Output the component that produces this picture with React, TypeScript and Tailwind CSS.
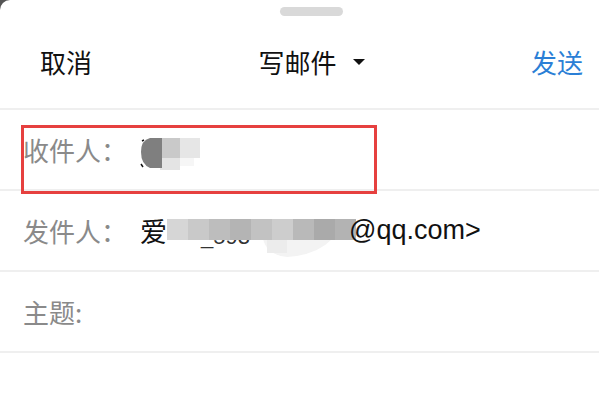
import React from "react";

const CJK = "font-['Noto_Sans_CJK_SC','Noto_Sans',sans-serif]";

function RecipientBlur() {
  return (
    <svg width="62" height="32" viewBox="0 0 62 32" aria-hidden="true" className="block">
      <rect x="20" y="0" width="20" height="20" fill="#c9c9c9" />
      <rect x="20" y="20" width="20" height="12" fill="#e4e4e4" />
      <rect x="40" y="0" width="20" height="20" fill="#e6e6e6" />
      <rect x="40" y="20" width="14" height="8" fill="#f6f6f6" />
      <path d="M22 0 H10 Q1 2 1 14 Q1 26 10 30 L22 30 Z" fill="#7f7f7f" />
      <path d="M2 3 L4 2 M1 26 L3 29" stroke="#111" strokeWidth="1.5" />
    </svg>
  );
}

function SenderBlur() {
  const tops = ["#d6d6d6", "#c9c9c9", "#bdbdbd", "#b4b4b4", "#c2c2c2", "#cdcdcd", "#b9b9b9", "#aaaaaa", "#b3b3b3"];
  return (
    <svg width="198" height="40" viewBox="0 0 198 40" aria-hidden="true" className="block -mr-[16px] mt-[16px]">
      <text x="34" y="25" fontSize="22" fill="#333" fontFamily="Liberation Sans, sans-serif">_593</text>
      <path d="M96 20 Q100 36 120 38 Q150 36 165 20 Z" fill="#f3f3f3" />
      <rect x="100" y="20" width="20" height="14" fill="#ececec" />
      {tops.map((c, i) => (
        <rect key={i} x={i * 21} y="0" width="21" height="21" fill={c} />
      ))}
    </svg>
  );
}

function Row({ label, children }: { label: string; children?: React.ReactNode }) {
  return (
    <div className="flex h-[81px] items-center pl-[23px] border-b-2 border-[#efefef]">
      <div className={`w-[117px] shrink-0 text-[26px] text-[#8a8a8a] ${CJK}`}>{label}</div>
      <div className="flex items-center">{children}</div>
    </div>
  );
}

export default function App() {
  return (
    <div className={`w-[599px] h-[398px] overflow-hidden bg-[#555] ${CJK}`}>
      <div className="h-full bg-white rounded-tl-[10px]">
        {/* header */}
        <div className="border-b-2 border-[#efefef]">
          <div className="flex justify-center pl-[40px] pr-[16px] pt-[7px]">
            <div className="w-[63px] h-[9px] rounded-full bg-[#d9d9d9]" />
          </div>
          <div className="flex h-[92px] items-center justify-between pl-[40px] pr-[16px] pb-[2px] text-[26px]">
            <span className="text-[#111]">取消</span>
            <span className="flex items-center text-[#111]">
              写邮件
              <svg width="12" height="7" viewBox="0 0 12 7" className="ml-[16px] mt-[2px]">
                <path d="M0 0 H12 L6 6 Z" fill="#111" />
              </svg>
            </span>
            <span className="text-[#2b7fd6]">发送</span>
          </div>
        </div>

        <div className="relative">
          <Row label="收件人：">
            <div className="mt-[8px]">
              <RecipientBlur />
            </div>
          </Row>
          <div className="absolute left-[21px] top-[15px] w-[356px] h-[69px] border-[3px] border-[#e6403f]" />
        </div>

        <Row label="发件人：">
          <span className="text-[27px] text-[#111] leading-none">爱</span>
          <SenderBlur />
          <span className="text-[27px] text-[#111] leading-none font-['Liberation_Sans',sans-serif]">@qq.com&gt;</span>
        </Row>

        <Row label="主题:" />
      </div>
    </div>
  );
}
